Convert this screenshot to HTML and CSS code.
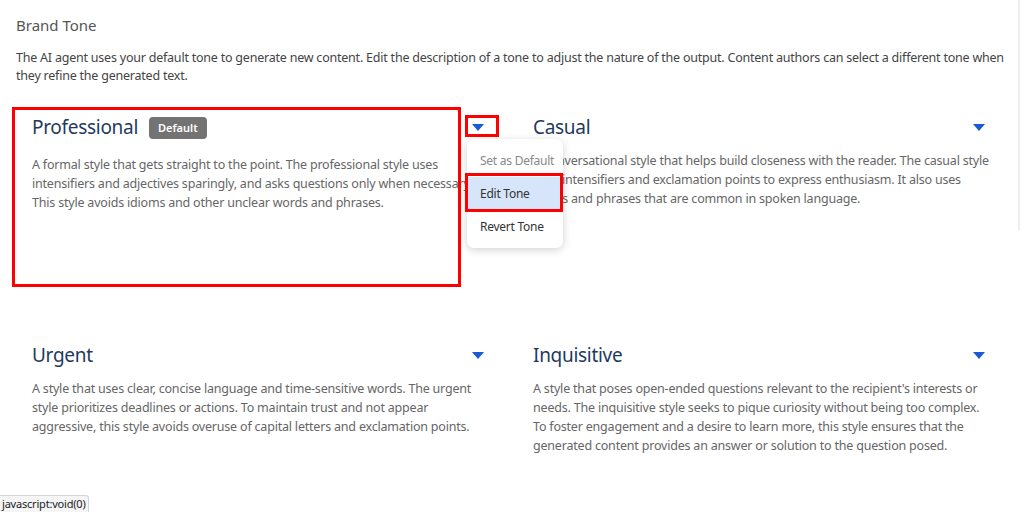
FILE: index.html
```html
<!DOCTYPE html>
<html>
<head>
<meta charset="utf-8">
<link rel="stylesheet" href="styles.css">
</head>
<body>
<main class="page">
  <h1 class="page-title">Brand Tone</h1>
  <p class="intro">The AI agent uses your default tone to generate new content. Edit the description of a tone to adjust the nature of the output. Content authors can select a different tone when they refine the generated text.</p>

  <section class="tones">
    <article class="tone">
      <div class="tone-head tall">
        <h2 class="tone-title">Professional</h2>
        <span class="badge">Default</span>
        <button class="caret-btn" aria-label="Options">
          <svg width="12" height="7" viewBox="0 0 12 7"><path d="M0 0H12L6 7Z" fill="#1a5ad6"/></svg>
        </button>
        <span class="mark mark-caret"></span>
        <div class="menu">
          <div class="menu-item disabled">Set as Default</div>
          <div class="menu-item active">Edit Tone<span class="mark mark-item"></span></div>
          <div class="menu-item">Revert Tone</div>
        </div>
      </div>
      <p class="tone-desc">A formal style that gets straight to the point. The professional style uses intensifiers and adjectives sparingly, and asks questions only when necessary. This style avoids idioms and other unclear words and phrases.</p>
      <span class="mark mark-card"></span>
    </article>

    <article class="tone">
      <div class="tone-head">
        <h2 class="tone-title">Casual</h2>
        <button class="caret-btn" aria-label="Options">
          <svg width="12" height="7" viewBox="0 0 12 7"><path d="M0 0H12L6 7Z" fill="#1a5ad6"/></svg>
        </button>
      </div>
      <p class="tone-desc">A conversational style that helps build closeness with the reader. The casual style uses intensifiers and exclamation points to express enthusiasm. It also uses words and phrases that are common in spoken language.</p>
    </article>

    <article class="tone">
      <div class="tone-head">
        <h2 class="tone-title">Urgent</h2>
        <button class="caret-btn" aria-label="Options">
          <svg width="12" height="7" viewBox="0 0 12 7"><path d="M0 0H12L6 7Z" fill="#1a5ad6"/></svg>
        </button>
      </div>
      <p class="tone-desc">A style that uses clear, concise language and time-sensitive words. The urgent style prioritizes deadlines or actions. To maintain trust and not appear aggressive, this style avoids overuse of capital letters and exclamation points.</p>
    </article>

    <article class="tone">
      <div class="tone-head">
        <h2 class="tone-title">Inquisitive</h2>
        <button class="caret-btn" aria-label="Options">
          <svg width="12" height="7" viewBox="0 0 12 7"><path d="M0 0H12L6 7Z" fill="#1a5ad6"/></svg>
        </button>
      </div>
      <p class="tone-desc">A style that poses open-ended questions relevant to the recipient's interests or needs. The inquisitive style seeks to pique curiosity without being too complex. To foster engagement and a desire to learn more, this style ensures that the generated content provides an answer or solution to the question posed.</p>
    </article>
  </section>
</main>
<div class="scroll-thumb"></div>
<div class="status">javascript:void(0)</div>
</body>
</html>
```

FILE: styles.css
```css
* { box-sizing: border-box; }
html, body { margin: 0; background: #fff; }
body {
  font-family: "Noto Sans", "Open Sans", sans-serif;
  color: #444;
  overflow: hidden;
  height: 512px;
  position: relative;
}
.page { padding: 14px 22px 0 16px; }
.page-title {
  margin: 0;
  font-size: 15px;
  line-height: 22px;
  font-weight: 400;
  color: #555;
}
.intro {
  margin: 13px -8px 0 0;
  font-size: 12.5px;
  letter-spacing: -0.22px;
  line-height: 18px;
  color: #444;
}
.tones {
  margin-top: 29px;
  display: grid;
  grid-template-columns: 1fr 1fr;
  column-gap: 16px;
  row-gap: 68px;
}
.tone {
  position: relative;
  height: 160px;
  padding: 0 16px;
}
.tone-head {
  position: relative;
  display: flex;
  align-items: flex-start;
  height: 37px;
}
.tone-head.tall { height: 41px; }
.tone-title {
  margin: 0;
  font-size: 19px;
  letter-spacing: -0.3px;
  line-height: 26px;
  font-weight: 400;
  color: #1f3a60;
}
.badge {
  margin: 3px 0 0 11px;
  height: 22px;
  padding: 0 9px;
  border-radius: 4px;
  background: #737373;
  color: #fff;
  font-size: 11px;
  font-weight: 600;
  line-height: 22px;
}
.caret-btn {
  margin-left: auto;
  border: 0;
  background: none;
  padding: 0;
  width: 14px;
  height: 26px;
  display: flex;
  align-items: center;
  justify-content: center;
  cursor: pointer;
}
.tone-desc {
  margin: 0 -6px 0 0;
  font-size: 12.5px;
  letter-spacing: -0.2px;
  line-height: 19px;
  color: #666;
}
.menu {
  position: absolute;
  left: 435px;
  top: 25px;
  width: 96px;
  padding: 5px 0;
  background: #fff;
  border-radius: 7px;
  box-shadow: 0 2px 8px rgba(0,0,0,0.18);
  z-index: 3;
}
.menu-item {
  position: relative;
  height: 33px;
  line-height: 33px;
  padding-left: 13px;
  font-size: 12px;
  letter-spacing: -0.25px;
  color: #333;
  white-space: nowrap;
}
.menu-item.disabled { color: #888; }
.menu-item.active { background: #d7e5fb; }
.mark {
  position: absolute;
  border: 3px solid #f00;
  z-index: 4;
  pointer-events: none;
}
.mark-card { left: -4px; top: -7px; width: 449px; height: 180px; }
.mark-caret { left: 433px; top: 1px; width: 34px; height: 22px; }
.mark-item { left: -2px; top: -4px; width: 98px; height: 39px; }
.scroll-thumb {
  position: absolute;
  right: 4px;
  top: 0;
  width: 2px;
  height: 230px;
  background: #eeeeee;
}
.status {
  position: absolute;
  left: 0;
  bottom: 0;
  height: 17px;
  padding: 0 2px;
  border: 1px solid #d6d6d6;
  border-left: 0;
  border-bottom: 0;
  border-radius: 0 3px 0 0;
  background: #f5f5f5;
  font-size: 11px;
  letter-spacing: -0.2px;
  line-height: 16px;
  color: #222;
}
```
